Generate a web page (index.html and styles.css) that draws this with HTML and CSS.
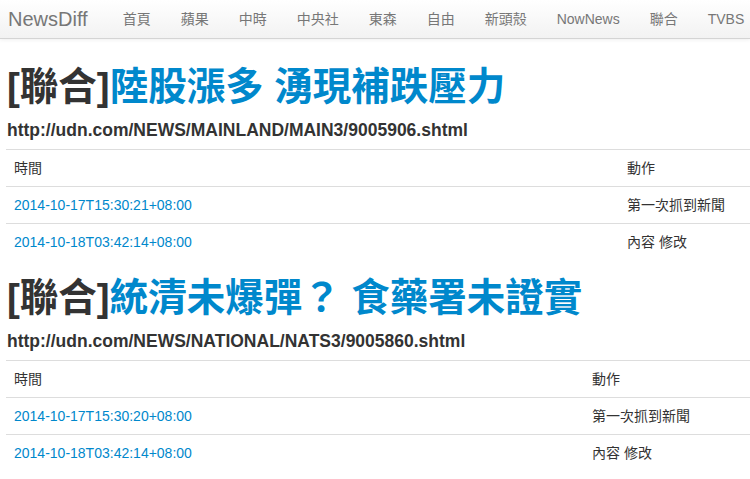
FILE: index.html
```
<!DOCTYPE html>
<html lang="zh-Hant">
<head>
<meta charset="utf-8">
<title>NewsDiff</title>
<link rel="stylesheet" href="styles.css">
</head>
<body>
<header class="navbar">
  <a class="brand" href="#">NewsDiff</a>
  <nav class="nav">
    <a href="#">首頁</a>
    <a href="#">蘋果</a>
    <a href="#">中時</a>
    <a href="#">中央社</a>
    <a href="#">東森</a>
    <a href="#">自由</a>
    <a href="#">新頭殼</a>
    <a href="#">NowNews</a>
    <a href="#">聯合</a>
    <a href="#">TVBS</a>
  </nav>
</header>
<main class="content">
  <section class="article">
    <h1 class="title">[聯合]<a href="#">陸股漲多 湧現補跌壓力</a></h1>
    <h4 class="url">http://udn.com/NEWS/MAINLAND/MAIN3/9005906.shtml</h4>
    <table class="log log-a">
      <thead><tr><td class="col-time">時間</td><td>動作</td></tr></thead>
      <tbody>
        <tr><td><a href="#">2014-10-17T15:30:21+08:00</a></td><td>第一次抓到新聞</td></tr>
        <tr><td><a href="#">2014-10-18T03:42:14+08:00</a></td><td>內容 修改</td></tr>
      </tbody>
    </table>
  </section>
  <section class="article">
    <h1 class="title">[聯合]<a href="#">統清未爆彈？ 食藥署未證實</a></h1>
    <h4 class="url">http://udn.com/NEWS/NATIONAL/NATS3/9005860.shtml</h4>
    <table class="log log-b">
      <thead><tr><td class="col-time">時間</td><td>動作</td></tr></thead>
      <tbody>
        <tr><td><a href="#">2014-10-17T15:30:20+08:00</a></td><td>第一次抓到新聞</td></tr>
        <tr><td><a href="#">2014-10-18T03:42:14+08:00</a></td><td>內容 修改</td></tr>
      </tbody>
    </table>
  </section>
</main>
</body>
</html>
```
FILE: styles.css
```
* { box-sizing: border-box; }
html, body { margin: 0; padding: 0; }
body {
  font-family: "Liberation Sans", "Noto Sans CJK TC", Arial, sans-serif;
  font-size: 14px;
  line-height: 20px;
  color: #333;
  background: #fff;
  overflow: hidden;
}
a { color: #0088cc; text-decoration: none; }

.navbar {
  display: flex;
  align-items: center;
  height: 39px;
  background: linear-gradient(to bottom, #ffffff, #f2f2f2);
  border-bottom: 1px solid #d4d4d4;
  box-shadow: 0 1px 4px rgba(0,0,0,0.065);
  padding-left: 8px;
  white-space: nowrap;
  overflow: hidden;
}
.brand {
  flex: none;
  font-size: 20px;
  color: #777;
  margin-right: 20px;
}
.nav { display: flex; flex: none; }
.nav a {
  flex: none;
  color: #777;
  font-size: 14px;
  padding: 0 15px;
}

.content { padding: 18px 0 0 6px; }
.title {
  margin: 10px 0 0 1px;
  font-size: 38.5px;
  line-height: 40px;
  font-weight: bold;
  color: #333;
}
.url {
  margin: 13px 0 0 1px;
  font-size: 17.5px;
  line-height: 20px;
  font-weight: bold;
  color: #333;
}
.log {
  width: 100%;
  border-collapse: collapse;
  margin: 9px 0 18px;
}
.log td {
  padding: 8px;
  border-top: 1px solid #ddd;
  text-align: left;
  vertical-align: top;
}
.log-a .col-time { width: 613px; }
.log-b .col-time { width: 578px; }
```
